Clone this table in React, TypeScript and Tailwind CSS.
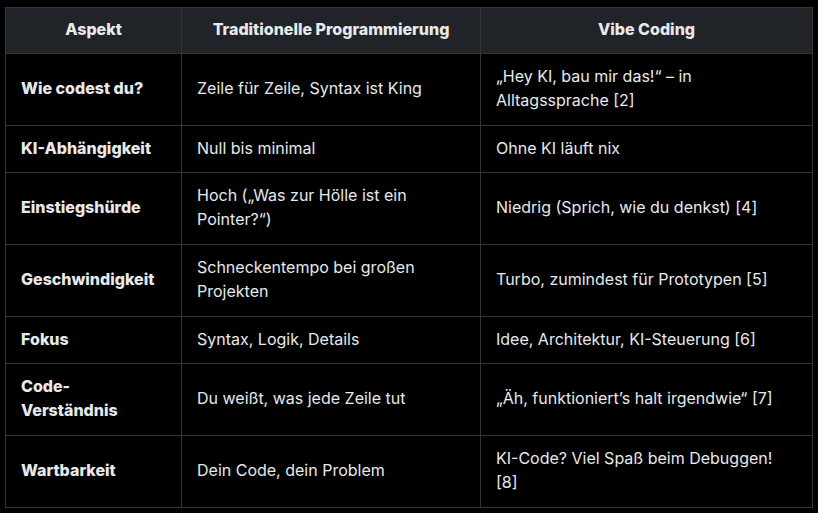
const rows: [string[], string[], string[]][] = [
  [["Wie codest du?"], ["Zeile für Zeile, Syntax ist King"], ["„Hey KI, bau mir das!“ – in", "Alltagssprache [2]"]],
  [["KI-Abhängigkeit"], ["Null bis minimal"], ["Ohne KI läuft nix"]],
  [["Einstiegshürde"], ["Hoch („Was zur Hölle ist ein", "Pointer?“)"], ["Niedrig (Sprich, wie du denkst) [4]"]],
  [["Geschwindigkeit"], ["Schneckentempo bei großen", "Projekten"], ["Turbo, zumindest für Prototypen [5]"]],
  [["Fokus"], ["Syntax, Logik, Details"], ["Idee, Architektur, KI-Steuerung [6]"]],
  [["Code-", "Verständnis"], ["Du weißt, was jede Zeile tut"], ["„Äh, funktioniert’s halt irgendwie“ [7]"]],
  [["Wartbarkeit"], ["Dein Code, dein Problem"], ["KI-Code? Viel Spaß beim Debuggen!", "[8]"]],
];

function Lines({ lines }: { lines: string[] }) {
  return (
    <>
      {lines.map((l, i) => (
        <div key={i} className="whitespace-nowrap">
          {l}
        </div>
      ))}
    </>
  );
}

export default function App() {
  return (
    <div className="h-[513px] w-[818px] bg-black pl-[5px] pt-[7px] font-['Inter',sans-serif] text-base leading-6 text-[#e7e9ea]">
      <table className="w-[807px] table-fixed border-collapse">
        <colgroup>
          <col className="w-[176px]" />
          <col className="w-[299px]" />
          <col className="w-[332px]" />
        </colgroup>
        <thead>
          <tr className="h-[46px] bg-[#202327]">
            <th className="border border-[#333639] px-[15px] pb-[3px] text-center font-extrabold">Aspekt</th>
            <th className="border border-[#333639] px-[15px] pb-[3px] text-center font-extrabold">Traditionelle Programmierung</th>
            <th className="border border-[#333639] px-[15px] pb-[3px] text-center font-extrabold">Vibe Coding</th>
          </tr>
        </thead>
        <tbody>
          {rows.map(([a, b, c], i) => (
            <tr key={i} className={i === 1 || i === 4 ? "h-[47px]" : "h-[72px]"}>
              <td className="border border-[#333639] px-[15px] pt-[9px] pb-[12px] align-middle font-extrabold">
                <Lines lines={a} />
              </td>
              <td className="border border-[#333639] px-[15px] pt-[9px] pb-[12px] align-middle">
                <Lines lines={b} />
              </td>
              <td className="border border-[#333639] px-[15px] pt-[9px] pb-[12px] align-middle">
                <Lines lines={c} />
              </td>
            </tr>
          ))}
        </tbody>
      </table>
    </div>
  );
}
